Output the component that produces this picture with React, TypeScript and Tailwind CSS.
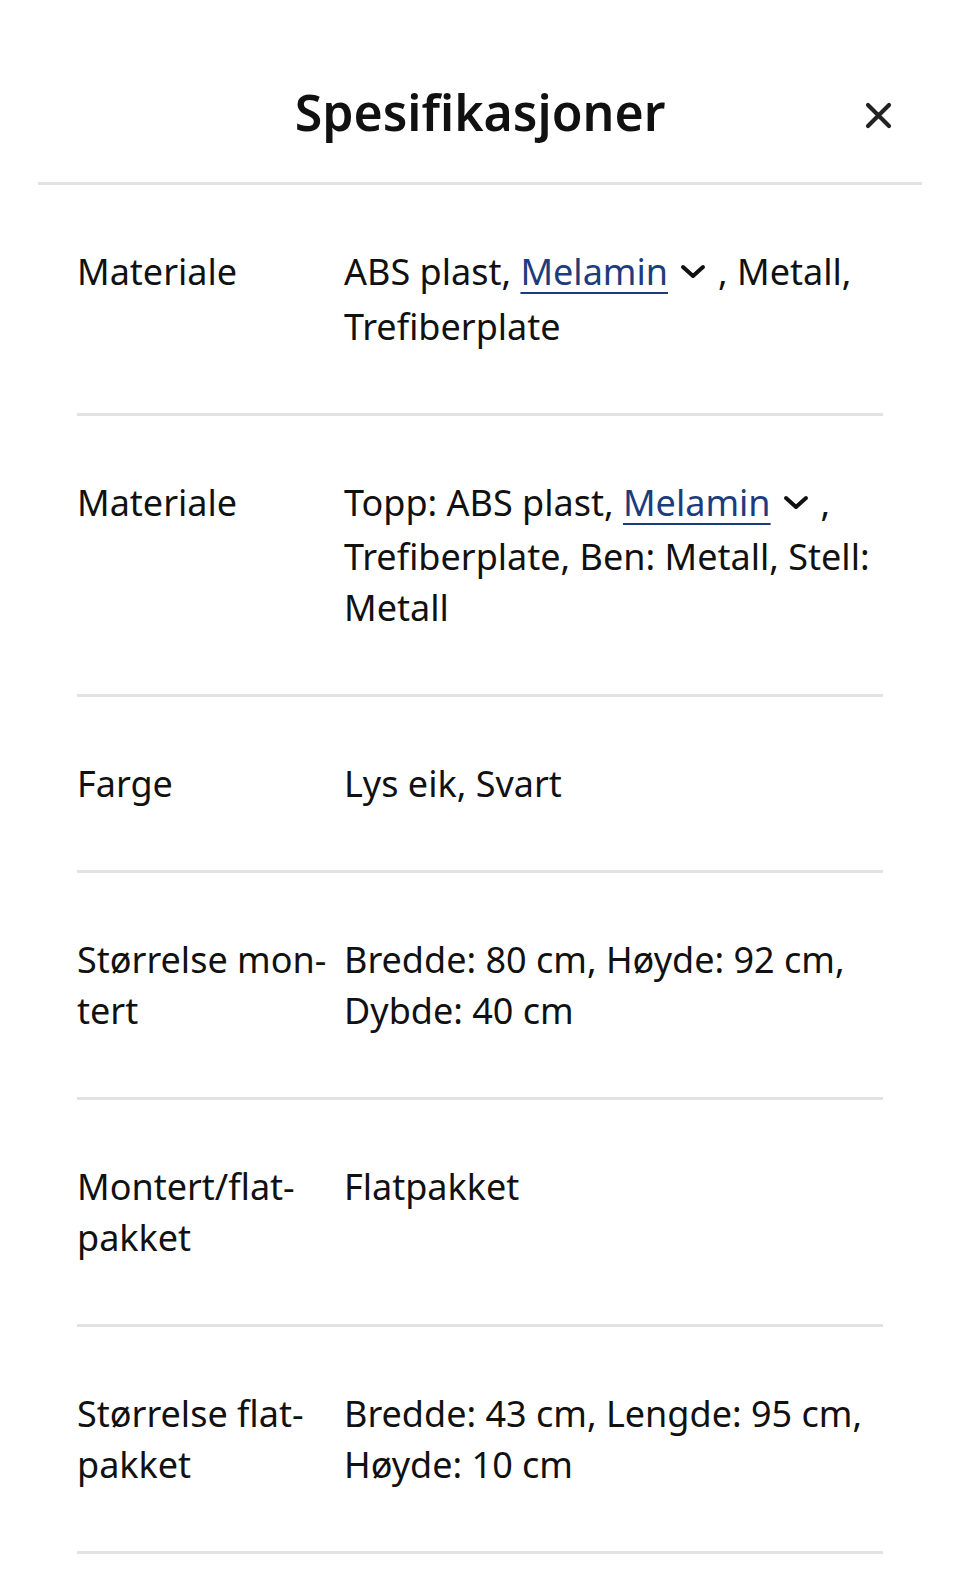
import { ReactNode } from "react"

const Chevron = () => (
  <svg
    width="26"
    height="16"
    viewBox="0 0 26 16"
    className="inline-block align-middle mx-[12px] mb-[6px]"
    fill="none"
    stroke="#111"
    strokeWidth="4"
    strokeLinecap="round"
    strokeLinejoin="round"
  >
    <path d="M3 3 L13 12 L23 3" />
  </svg>
)

const Link = ({ children }: { children: ReactNode }) => (
  <a className="text-[#1d3c7d] underline decoration-2 underline-offset-[7px]" href="#">
    {children}
  </a>
)

const rows: { label: ReactNode; value: ReactNode }[] = [
  {
    label: "Materiale",
    value: (
      <>
        <span className="block pb-[4px]">
          ABS plast, <Link>Melamin</Link>
          <Chevron />, Metall,
        </span>
        Trefiberplate
      </>
    ),
  },
  {
    label: "Materiale",
    value: (
      <>
        <span className="block pb-[3px]">
          Topp: ABS plast, <Link>Melamin</Link>
          <Chevron />,
        </span>
        Trefiberplate, Ben: Metall, Stell:
        <br />
        Metall
      </>
    ),
  },
  { label: "Farge", value: "Lys eik, Svart" },
  {
    label: (
      <>
        Størrelse mon-
        <br />
        tert
      </>
    ),
    value: (
      <>
        Bredde: 80 cm, Høyde: 92 cm,
        <br />
        Dybde: 40 cm
      </>
    ),
  },
  {
    label: (
      <>
        Montert/flat-
        <br />
        pakket
      </>
    ),
    value: "Flatpakket",
  },
  {
    label: (
      <>
        Størrelse flat-
        <br />
        pakket
      </>
    ),
    value: (
      <>
        Bredde: 43 cm, Lengde: 95 cm,
        <br />
        Høyde: 10 cm
      </>
    ),
  },
]

export default function App() {
  return (
    <div className="w-[960px] h-[1580px] bg-white overflow-hidden text-[#111] font-['Noto_Sans',sans-serif]">
      {/* header */}
      <div className="mx-[38px] h-[185px] border-b-[3px] border-[#e3e3e3] relative pt-[87px] text-center">
        <h1 className="text-[50px] leading-[50px] font-semibold text-[#111]">Spesifikasjoner</h1>
        <button className="absolute right-[29px] top-[100px] w-[30px] h-[30px] flex items-center justify-center">
          <svg width="27" height="27" viewBox="0 0 27 27" stroke="#222" strokeWidth="4.2" strokeLinecap="round">
            <path d="M3 3 L24 24 M24 3 L3 24" />
          </svg>
        </button>
      </div>

      {/* rows */}
      <div className="mx-[77px]">
        {rows.map((row, i) => (
          <div key={i} className="flex py-[61px] border-b-[3px] border-[#e3e3e3] text-[36px] leading-[51px]">
            <div className="w-[267px] shrink-0">{row.label}</div>
            <div className="flex-1">{row.value}</div>
          </div>
        ))}
      </div>
    </div>
  )
}
